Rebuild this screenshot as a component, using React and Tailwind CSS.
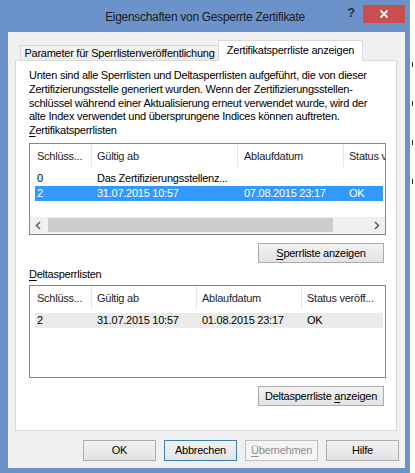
const COLS_1 = [
  { label: 'Schlüss...', w: 'w-[62px]', pl: 'pl-[7px]' },
  { label: 'Gültig ab', w: 'w-[146px]', pl: 'pl-[5px]' },
  { label: 'Ablaufdatum', w: 'w-[106px]', pl: 'pl-[6px]' },
  { label: 'Status veröff...', w: 'flex-1', pl: 'pl-[5px]' },
]

const COLS_2 = [
  { label: 'Schlüss...', w: 'w-[62px]', pl: 'pl-[7px]' },
  { label: 'Gültig ab', w: 'w-[105px]', pl: 'pl-[5px]' },
  { label: 'Ablaufdatum', w: 'w-[105px]', pl: 'pl-[5px]' },
  { label: 'Status veröff...', w: 'flex-1', pl: 'pl-[5px]' },
]

const ROW_COLS_1 = ['w-[57px] pl-[2px]', 'w-[146px] pl-[5px]', 'w-[106px] pl-[6px]', 'flex-1 pl-[5px]']
const ROW_COLS_2 = ['w-[57px] pl-[2px]', 'w-[105px] pl-[5px]', 'w-[105px] pl-[5px]', 'flex-1 pl-[5px]']

function Chevron({ dir }) {
  return (
    <svg width="17" height="17" viewBox="0 0 17 17">
      <polyline
        points={dir === 'left' ? '10,5 6.5,8.5 10,12' : '7,5 10.5,8.5 7,12'}
        fill="none"
        stroke="#606060"
        strokeWidth="1.6"
      />
    </svg>
  )
}

function Header({ cols }) {
  return (
    <div className="h-[23px] flex shrink-0 text-[#1e1e1e]">
      {cols.map((c, i) => (
        <div
          key={i}
          className={`${c.w} ${c.pl} ${i < cols.length - 1 ? 'border-r border-[#e5e5e5]' : ''} flex items-center pt-[2px] whitespace-nowrap overflow-hidden`}
        >
          {c.label}
        </div>
      ))}
    </div>
  )
}

function Row({ cells, cols, className }) {
  return (
    <div className={`h-[15px] ml-[5px] mr-[2px] flex items-center leading-[15px] whitespace-nowrap ${className}`}>
      {cells.map((t, i) => (
        <div key={i} className={`${cols[i]} overflow-hidden`}>{t}</div>
      ))}
    </div>
  )
}

function Button({ children, className = '', w = 'w-[73px]', h = 'h-[21px]' }) {
  return (
    <div
      className={`${w} ${h} flex items-center justify-center border bg-gradient-to-b from-[#f2f2f2] to-[#e3e3e3] ${className}`}
    >
      {children}
    </div>
  )
}

export default function App() {
  return (
    <div className="w-[415px] h-[473px] bg-white flex overflow-hidden font-['Liberation_Sans',Arial,sans-serif] text-[11px] tracking-[-0.25px] text-black">
      <div className="w-[410px] h-full bg-[#6b93ca] flex flex-col shrink-0">
        {/* title bar */}
        <div className="h-[32px] flex items-start shrink-0">
          <div className="w-[64px]" />
          <div className="flex-1 text-center text-[12px] tracking-[-0.3px] leading-[14px] pt-[10px] text-[#1b1b1b]">
            Eigenschaften von Gesperrte Zertifikate
          </div>
          <div className="w-[64px] flex items-start pt-[5px]">
            <div className="w-[10px] text-center text-[13px] font-bold leading-[16px] text-[#2a2f3d]">?</div>
            <div className="ml-[7px] w-[42px] h-[18px] bg-[#c7504e] flex items-center justify-center">
              <svg width="10" height="10" viewBox="0 0 10 10">
                <path d="M1.5 1.5 L8.5 8.5 M8.5 1.5 L1.5 8.5" stroke="white" strokeWidth="1.8" />
              </svg>
            </div>
          </div>
        </div>

        {/* client area */}
        <div className="flex-1 ml-[8px] mr-[5px] mb-[5px] bg-[#f0f0f0] flex flex-col pt-[8px] px-[7px]">
          <div className="h-[20px] flex items-end pl-[5px] shrink-0">
            <div className="w-[199px] h-[15px] border border-b-0 border-[#d9d9d9] bg-gradient-to-b from-[#f4f4f4] to-[#ececec] flex items-center justify-center leading-[13px] pt-[1px] whitespace-nowrap">
              Parameter für Sperrlistenveröffentlichung
            </div>
            <div className="relative z-10 -ml-[1px] -mb-[1px] w-[145px] h-[21px] border border-b-0 border-[#d9d9d9] bg-white flex justify-center pt-[3px] leading-[13px] whitespace-nowrap">
              Zertifikatsperrliste anzeigen
            </div>
          </div>

          {/* tab panel */}
          <div className="w-[382px] h-[371px] border border-[#d9d9d9] bg-white flex flex-col pt-[8px] pl-[13px] pr-[10px] shrink-0">
            <p className="leading-[13.75px] whitespace-nowrap">
              Unten sind alle Sperrlisten und Deltasperrlisten aufgeführt, die von dieser<br />
              Zertifizierungsstelle generiert wurden. Wenn der Zertifizierungsstellen-<br />
              schlüssel während einer Aktualisierung erneut verwendet wurde, wird der<br />
              alte Index verwendet und übersprungene Indices können auftreten.
            </p>
            <div className="leading-[13.75px]">
              <span className="underline underline-offset-[2px]">Z</span>ertifikatsperrlisten
            </div>

            <div className="mt-[5px] h-[92px] border border-[#828790] flex flex-col shrink-0">
              <Header cols={COLS_1.map((c, i) => (i === 3 ? { ...c, label: 'Status veröff...' } : c))} />
              <div className="pt-[4px]">
                <Row cols={ROW_COLS_1} cells={['0', 'Das Zertifizierungsstellenz...', '', '']} />
                <Row cols={ROW_COLS_1} className="bg-[#3399ff] text-white" cells={['2', '31.07.2015 10:57', '07.08.2015 23:17', 'OK']} />
              </div>
              <div className="flex-1" />
              <div className="h-[17px] bg-[#f0f0f0] flex items-stretch shrink-0">
                <Chevron dir="left" />
                <div className="ml-[1px] mt-[1px] mb-[2px] w-[285px] bg-[#cdcdcd]" />
                <div className="flex-1" />
                <Chevron dir="right" />
              </div>
            </div>

            <div className="mt-[8px] self-end mr-[2px]">
              <Button w="w-[126px]" h="h-[20px]" className="border-[#acacac]">
                <span><span className="underline underline-offset-[2px]">S</span>perrliste anzeigen</span>
              </Button>
            </div>

            <div className="mt-[4px] leading-[14px]">
              <span className="underline underline-offset-[2px]">D</span>eltasperrlisten
            </div>

            <div className="mt-[4px] h-[93px] border border-[#828790] flex flex-col shrink-0">
              <Header cols={COLS_2} />
              <div className="pt-[4px]">
                <Row cols={ROW_COLS_2} className="bg-[#ebebeb]" cells={['2', '31.07.2015 10:57', '01.08.2015 23:17', 'OK']} />
              </div>
            </div>

            <div className="mt-[8px] self-end mr-[2px]">
              <Button w="w-[126px]" h="h-[20px]" className="border-[#acacac]">
                <span>Deltasperrliste <span className="underline underline-offset-[2px]">a</span>nzeigen</span>
              </Button>
            </div>
          </div>

          {/* dialog buttons */}
          <div className="mt-[9px] flex justify-end gap-[8px] pr-[-1px] mr-[-1px]">
            <Button className="border-[#acacac]">OK</Button>
            <Button className="border-[#3c7fb1]">Abbrechen</Button>
            <Button className="border-[#bfbfbf] !bg-none bg-[#f4f4f4] text-[#8d8d8d]">
              <span><span className="underline underline-offset-[2px]">Ü</span>bernehmen</span>
            </Button>
            <Button className="border-[#acacac]">Hilfe</Button>
          </div>
        </div>
      </div>

      {/* background behind the window */}
      <div className="flex-1 flex flex-col gap-[34px] pt-[62px] pl-[2px]">
        <div className="w-[1px] h-[5px] bg-[#333]" />
        <div className="w-[1px] h-[5px] bg-[#333]" />
        <div className="w-[1px] h-[5px] bg-[#333]" />
        <div className="w-[1px] h-[5px] bg-[#333]" />
      </div>
    </div>
  )
}
